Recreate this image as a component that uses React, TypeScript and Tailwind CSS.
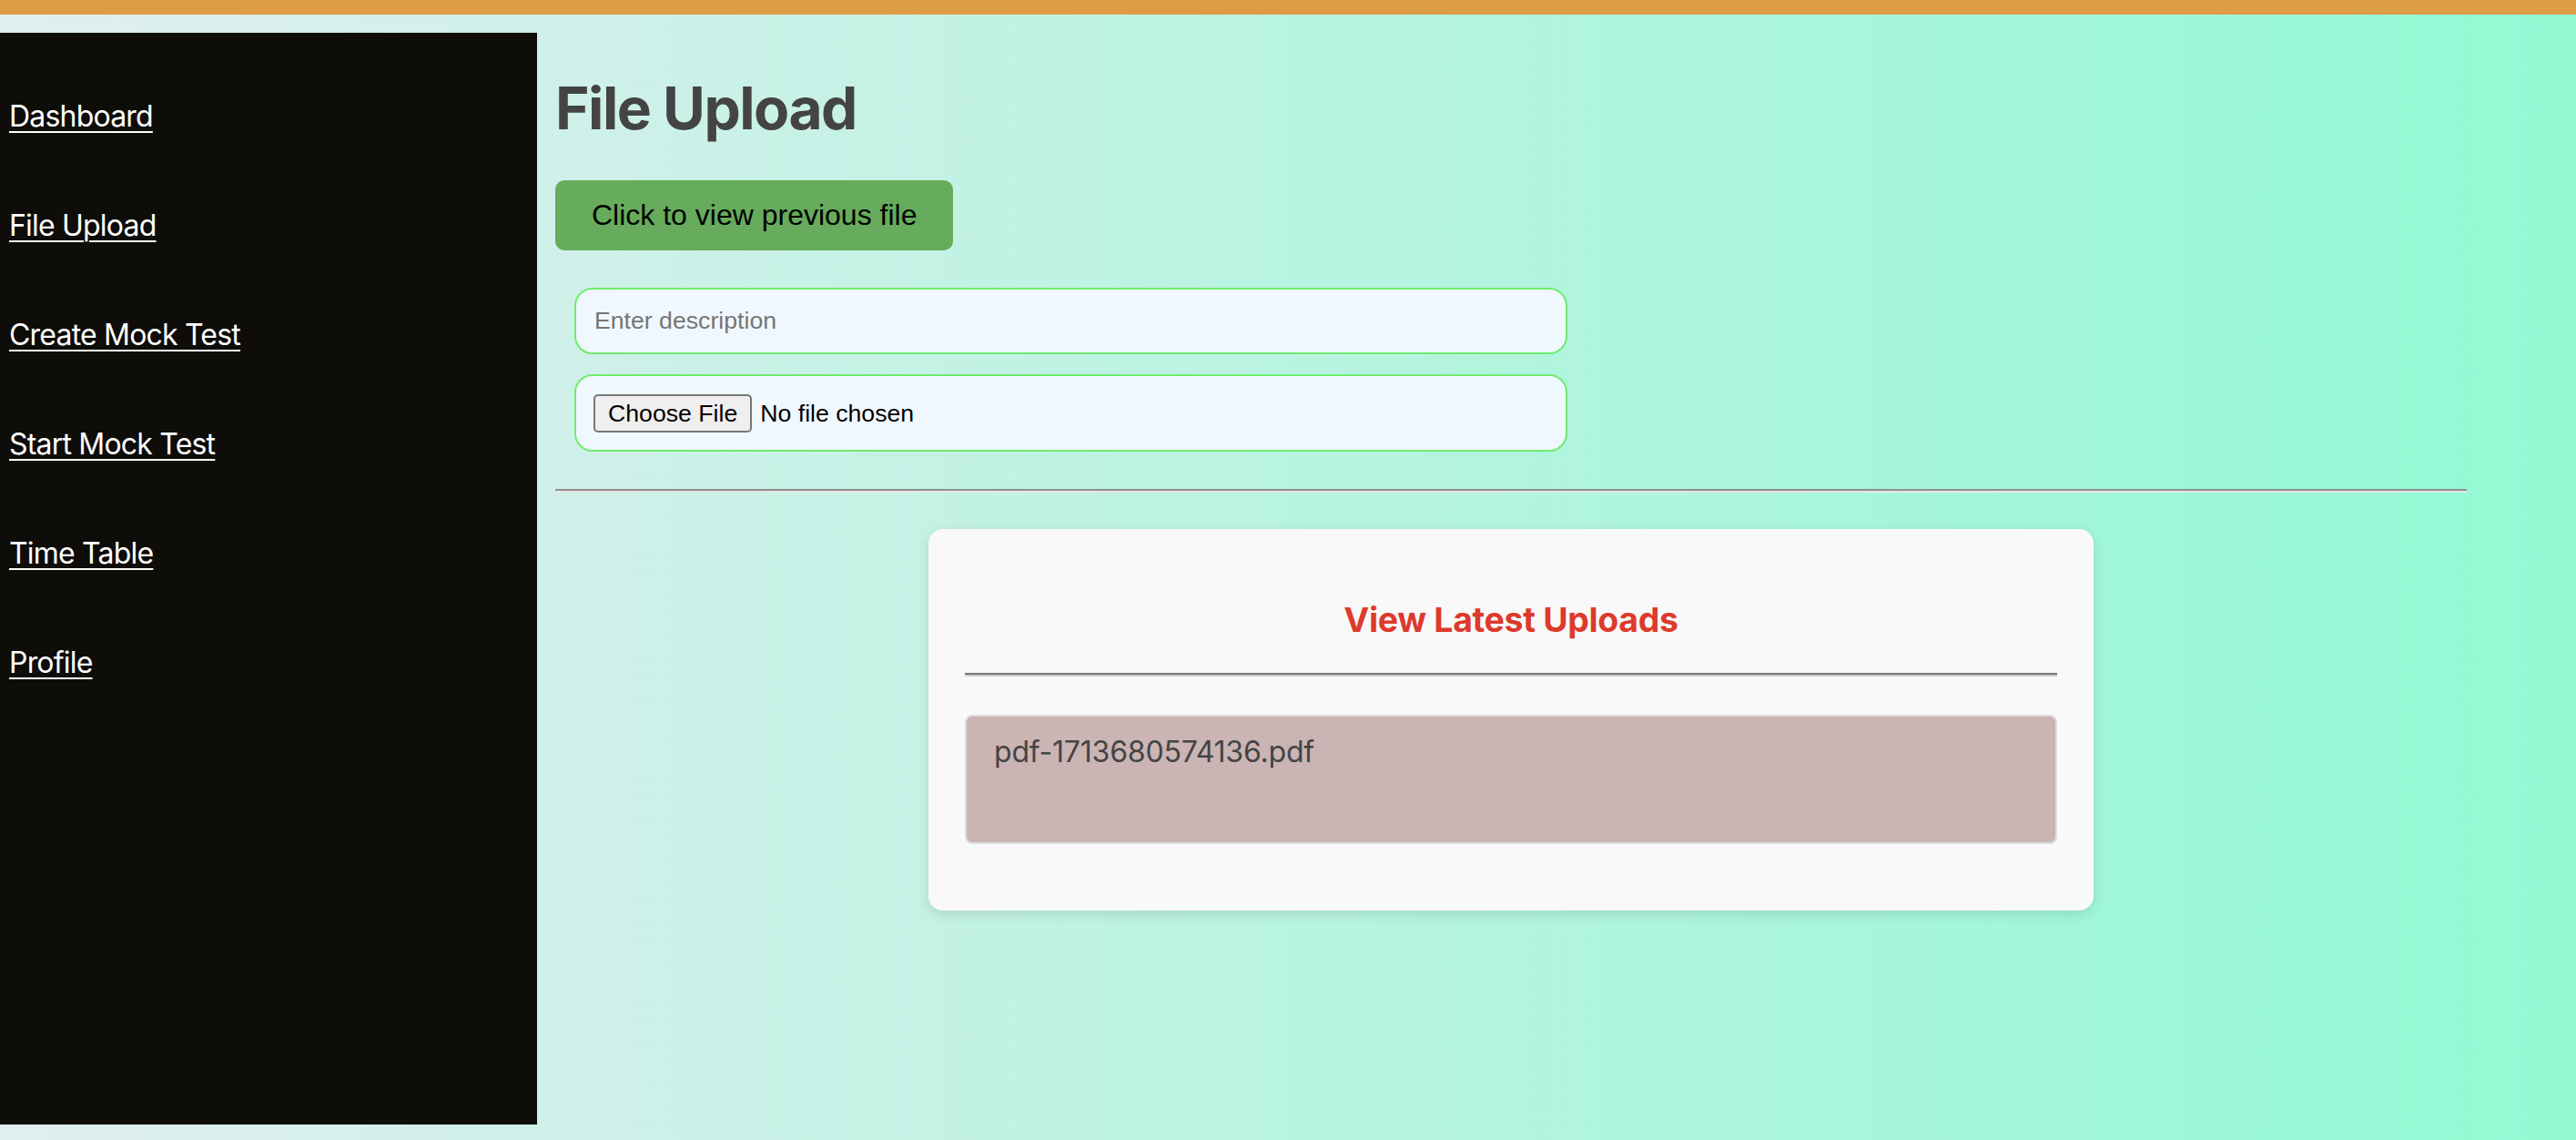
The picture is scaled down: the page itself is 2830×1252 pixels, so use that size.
import React from "react";

const links = ["Dashboard", "File Upload", "Create Mock Test", "Start Mock Test", "Time Table", "Profile"];

export default function App() {
  return (
    <div className="min-h-[1252px] w-[2830px] bg-[linear-gradient(to_right,#e0eeef,#92f9d3)] font-['Inter',sans-serif]">
      <div className="h-[16px] bg-[#de9c46]" />
      <div className="mt-[20px] flex">
        <nav className="flex h-[1199px] w-[590px] shrink-0 flex-col gap-[80px] bg-[#0e0d0a] pl-[10px] pt-[72px]">
          {links.map((l) => (
            <a key={l} href="#" className="text-[32px] leading-[40px] tracking-[-0.8px] text-white underline decoration-2 underline-offset-[5px]">
              {l}
            </a>
          ))}
        </nav>
        <main className="flex-1 pl-[20px] pr-[120px]">
          <h1 className="mt-[44px] text-[64px] font-bold leading-[77px] tracking-[-1.5px] text-[#444444]">File Upload</h1>
          <button className="mt-[41px] block rounded-[10px] bg-[#66ac5c] px-[40px] py-[20px] font-['Liberation_Sans',Arial,sans-serif] text-[32px] leading-[37px] text-black">
            Click to view previous file
          </button>
          <div className="ml-[21px] mt-[41px] flex w-[1091px] flex-col gap-[22px]">
            <input
              type="text"
              placeholder="Enter description"
              className="h-[73px] w-full rounded-[20px] border-2 border-[#6feb6f] bg-[#f0f8ff] px-[20px] font-['Liberation_Sans',Arial,sans-serif] text-[26.67px] text-black outline-none placeholder:text-[#757575]"
            />
            <div className="flex h-[85px] w-full items-center rounded-[20px] border-2 border-[#6feb6f] bg-[#f0f8ff] pl-[19px] pt-[1px] font-['Liberation_Sans',Arial,sans-serif] text-[26.67px] text-black">
              <span className="flex h-[42px] items-center rounded-[5px] border-2 border-[#767676] bg-[#efefef] px-[14px]">Choose File</span>
              <span className="ml-[9px]">No file chosen</span>
            </div>
          </div>
          <hr className="mt-[41px] h-0 border-0 border-t-2 border-b-2 border-t-[#8e8e8e] border-b-[#e6e6e6]" />
          <div className="mx-auto mt-[40px] w-[1280px] rounded-[16px] bg-[#f9f9f9] px-[40px] pb-[73px] pt-[77px] shadow-[0_4px_14px_rgba(0,0,0,0.12)]">
            <h3 className="text-center text-[37.4px] font-bold leading-[45px] tracking-[-0.3px] text-[#dd3a2c]">View Latest Uploads</h3>
            <hr className="mt-[36px] h-0 border-0 border-t-2 border-b-2 border-t-[#787878] border-b-[#cccccc]" />
            <div className="mt-[42px] h-[142px] rounded-[8px] border-2 border-[#dedede] bg-[#cbb4b4] pl-[30px] pt-[20px] text-[32px] leading-[38px] tracking-[-0.2px] text-[#444444]">
              pdf-1713680574136.pdf
            </div>
          </div>
        </main>
      </div>
    </div>
  );
}
